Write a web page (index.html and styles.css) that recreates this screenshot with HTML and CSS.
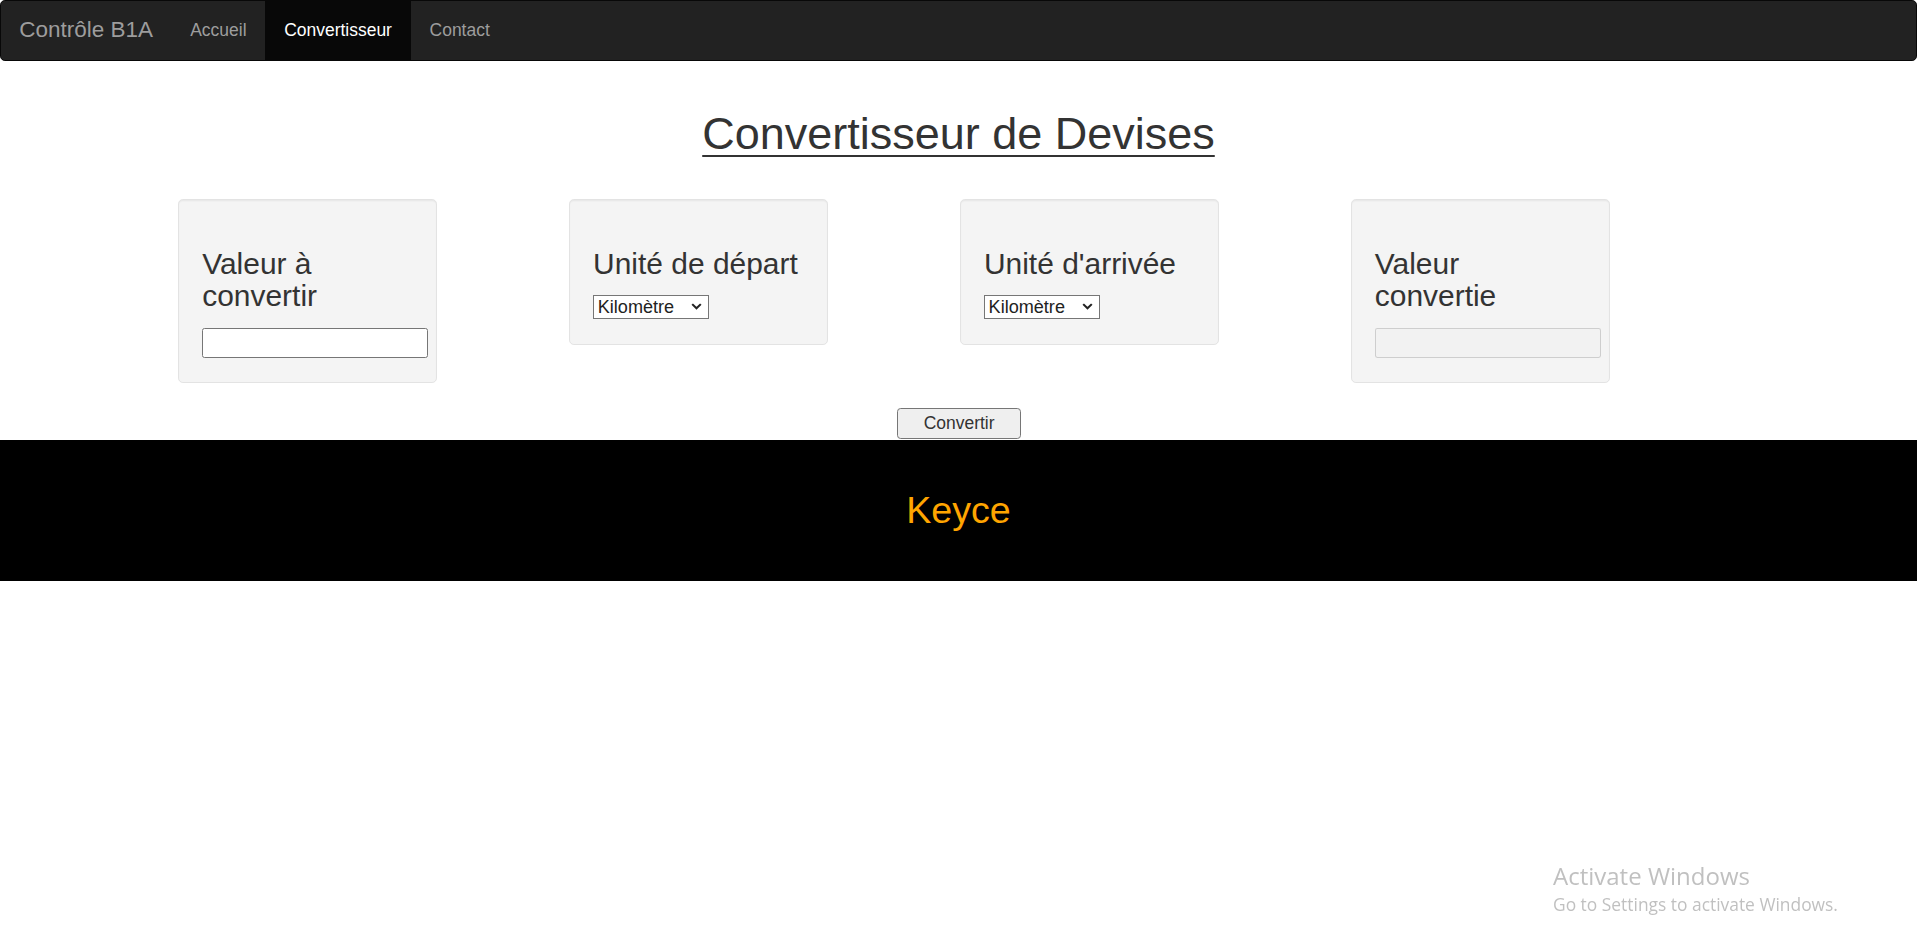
FILE: index.html
```html
<!DOCTYPE html>
<html lang="fr">
<head>
<meta charset="utf-8">
<title>Convertisseur</title>
<link rel="stylesheet" href="styles.css">
</head>
<body>
<div class="page">
  <nav class="navbar">
    <a class="brand" href="#">Contrôle B1A</a>
    <ul class="nav">
      <li><a href="#">Accueil</a></li>
      <li class="active"><a href="#">Convertisseur</a></li>
      <li><a href="#">Contact</a></li>
    </ul>
  </nav>

  <h1 class="title">Convertisseur de Devises</h1>

  <div class="cards">
    <div class="well">
      <h3>Valeur à<br>convertir</h3>
      <input class="field" type="text">
    </div>
    <div class="well">
      <h3>Unité de départ</h3>
      <select class="unit"><option>Kilomètre</option></select>
    </div>
    <div class="well">
      <h3>Unité d'arrivée</h3>
      <select class="unit"><option>Kilomètre</option></select>
    </div>
    <div class="well">
      <h3>Valeur<br>convertie</h3>
      <input class="field" type="text" disabled>
    </div>
  </div>

  <div class="actions">
    <button class="btn" type="button">Convertir</button>
  </div>

  <footer class="footer">
    <h2>Keyce</h2>
  </footer>
</div>

<div class="watermark">
  <div class="wm-title">Activate Windows</div>
  <div class="wm-sub">Go to Settings to activate Windows.</div>
</div>
</body>
</html>
```

FILE: styles.css
```css
html, body {
  margin: 0;
  padding: 0;
  background: #fff;
}

body {
  font-family: "Liberation Sans", Arial, Helvetica, sans-serif;
  font-size: 14.3px;
  line-height: 20px;
  color: #333;
}

.page {
  zoom: 1.2226;
}

/* Navbar */
.navbar {
  display: flex;
  align-items: stretch;
  height: 50px;
  box-sizing: border-box;
  background: #222;
  border: 1px solid #080808;
  border-radius: 4px;
  margin-bottom: 20px;
}

.brand {
  display: block;
  padding: 14px 15px 15px 15px;
  font-size: 18.4px;
  line-height: 20px;
  color: #9d9d9d;
  text-decoration: none;
}

.nav {
  display: flex;
  list-style: none;
  margin: 0;
  padding: 0;
}

.nav li {
  display: flex;
}

.nav a {
  display: block;
  padding: 14px 15.4px 15px 15.4px;
  font-size: 14.3px;
  line-height: 20px;
  color: #9d9d9d;
  text-decoration: none;
}

.nav .active a {
  color: #fff;
  background: #080808;
  margin-top: -1px;
  margin-bottom: -1px;
  padding-top: 15px;
}

/* Title */
.title {
  margin: 40px 0 0 0;
  font-size: 36.8px;
  font-weight: 500;
  line-height: 39.6px;
  text-align: center;
  text-decoration: underline;
  text-decoration-thickness: 2px;
  text-underline-offset: 5px;
  color: #333;
}

/* Cards */
.cards {
  display: flex;
  align-items: flex-start;
  gap: 107.7px;
  padding-left: 145.6px;
  margin-top: 33.4px;
}

.well {
  box-sizing: border-box;
  width: 212px;
  padding: 19px;
  background: #f4f4f4;
  border: 1px solid #e3e3e3;
  border-radius: 4px;
  box-shadow: inset 0 1px 1px rgba(0, 0, 0, 0.05);
  margin-bottom: 20px;
}

.well h3 {
  margin: 20px 0 12.4px 0;
  font-size: 24.5px;
  font-weight: 500;
  line-height: 26.4px;
  color: #333;
}

.field {
  display: block;
  box-sizing: border-box;
  width: 185px;
  height: 24.6px;
  margin: 1.9px 0 1px 0;
  padding: 1px 2px;
  border: 1px solid #767676;
  border-radius: 2px;
  background: #fff;
  font-family: inherit;
  font-size: 14.3px;
}

.field:disabled {
  background: rgba(239, 239, 239, 0.3);
  border-color: rgba(118, 118, 118, 0.3);
}

.unit {
  display: block;
  box-sizing: border-box;
  width: 95px;
  height: 19px;
  margin: 1.3px 0 1.7px 0;
  padding: 0 0 0 3px;
  border: 1px solid #767676;
  border-radius: 0;
  -webkit-appearance: none;
  appearance: none;
  background-color: #fff;
  background-image: url("data:image/svg+xml;utf8,<svg xmlns='http://www.w3.org/2000/svg' width='9' height='6' viewBox='0 0 9 6'><path d='M1 1 L4.5 4.5 L8 1' fill='none' stroke='%23222' stroke-width='1.7'/></svg>");
  background-repeat: no-repeat;
  background-position: right 5px center;
  background-size: 9px 6px;
  color: #222;
  font-family: inherit;
  font-size: 14.8px;
  line-height: 17px;
}

/* Button */
.actions {
  display: flex;
  justify-content: center;
  height: 26.6px;
  padding-left: 1px;
}

.btn {
  box-sizing: border-box;
  width: 102px;
  height: 25px;
  margin-top: 0.7px;
  padding: 0;
  background: #efefef;
  border: 1px solid #767676;
  border-radius: 3px;
  font-family: inherit;
  font-size: 14.3px;
  color: #333;
}

/* Footer */
.footer {
  background: #000;
  padding: 41px 0 41.3px 0;
  text-align: center;
}

.footer h2 {
  margin: 0;
  font-size: 30.8px;
  font-weight: 500;
  line-height: 33px;
  color: #ffa500;
}

/* Windows watermark (overlay) */
.watermark {
  position: fixed;
  left: 1553px;
  top: 861px;
  font-family: "Open Sans", "Noto Sans", sans-serif;
  color: rgba(150, 150, 150, 0.6);
  pointer-events: none;
}

.wm-title {
  font-size: 24px;
  line-height: 30px;
}

.wm-sub {
  font-size: 17.4px;
  line-height: 27px;
}
```
